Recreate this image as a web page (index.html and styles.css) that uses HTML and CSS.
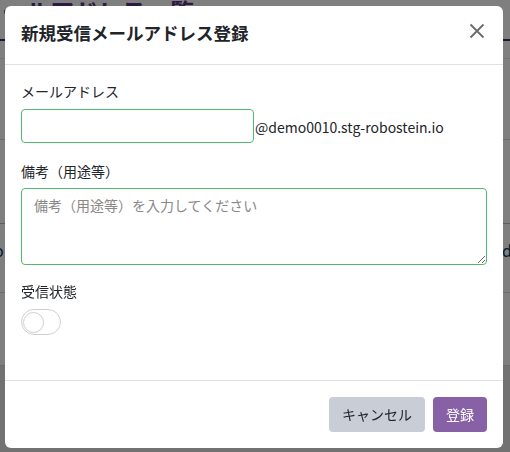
FILE: index.html
```html
<!DOCTYPE html>
<html lang="ja">
<head>
<meta charset="utf-8">
<title>新規受信メールアドレス登録</title>
<link rel="stylesheet" href="styles.css">
</head>
<body>
<div class="page" aria-hidden="true">
  <div class="page-head">
    <h1 class="page-title">受信メールアドレス一覧</h1>
  </div>
  <div class="table">
    <div class="row row-head"></div>
    <div class="row row-a"></div>
    <div class="row row-b"></div>
    <div class="row row-c"><span class="cell-l">o</span><span class="cell-r">d</span></div>
    <div class="row row-d"></div>
  </div>
</div>

<div class="overlay">
  <div class="modal">
    <div class="modal-header">
      <h2 class="modal-title">新規受信メールアドレス登録</h2>
      <button class="close" type="button" aria-label="閉じる">
        <svg width="16" height="16" viewBox="0 0 16 16"><path d="M1.5 1.5 L14.5 14.5 M14.5 1.5 L1.5 14.5" stroke="#6b6b6b" stroke-width="1.8" fill="none"/></svg>
      </button>
    </div>
    <div class="modal-body">
      <label class="label">メールアドレス</label>
      <div class="mail-row">
        <input class="input" type="text">
        <span class="domain">@demo0010.stg-robostein.io</span>
      </div>
      <label class="label label-note">備考（用途等）</label>
      <textarea class="textarea" placeholder="備考（用途等）を入力してください"></textarea>
      <label class="label label-state">受信状態</label>
      <div class="switch"><span class="knob"></span></div>
    </div>
    <div class="modal-footer">
      <button class="btn btn-cancel" type="button">キャンセル</button>
      <button class="btn btn-primary" type="button">登録</button>
    </div>
  </div>
</div>
</body>
</html>
```
FILE: styles.css
```css
html, body {
  margin: 0;
  padding: 0;
}
body {
  font-family: "Noto Sans CJK JP", "Noto Sans", sans-serif;
  color: #212529;
  background: #e4e4e4;
  width: 510px;
  height: 452px;
  overflow: hidden;
}

/* background page */
.page {
  background: #ffffff;
  height: 365px;
}
.page-head {
  height: 39px;
  border-bottom: 2px solid #4a2a6a;
  overflow: hidden;
}
.page-title {
  margin: 0 0 0 -70px;
  padding-top: 0;
  font-size: 24px;
  line-height: 24px;
  font-weight: bold;
  color: #5a3282;
  white-space: nowrap;
  position: relative;
  top: -1px;
}
.table {
  display: flex;
  flex-direction: column;
}
.row {
  border-bottom: 1px solid #d6d6d6;
  box-sizing: border-box;
  position: relative;
}
.row-head { height: 18px; border-bottom-color: #e6e6e6; }
.row-a { height: 81px; }
.row-b { height: 84px; border-bottom: 1px solid #bdbdbd; }
.row-c { height: 69px; background: #ffffff; }
.row-d { height: 73px; }
.cell-l, .cell-r {
  position: absolute;
  top: 16px;
  font-size: 16px;
  line-height: 20px;
  color: #003a6a;
}
.cell-l { left: -6px; }
.cell-r { right: -2px; }

/* modal */
.overlay {
  position: fixed;
  inset: 0;
  background: rgba(0, 0, 0, 0.5);
  padding: 6px 0 0 5px;
}
.modal {
  width: 498px;
  background: #ffffff;
  border-radius: 6px;
  display: flex;
  flex-direction: column;
}
.modal-header {
  height: 58px;
  border-bottom: 1px solid #dee2e6;
  display: flex;
  align-items: center;
  justify-content: space-between;
  padding: 0 18px 0 16px;
}
.modal-title {
  margin: 0;
  font-size: 17.5px;
  font-weight: bold;
  line-height: 24px;
  color: #212529;
  position: relative;
  top: -2px;
}
.close {
  border: 0;
  background: transparent;
  padding: 0;
  width: 16px;
  height: 16px;
  display: flex;
  position: relative;
  top: -4px;
}
.modal-body {
  padding: 16px 16px 45px;
  display: flex;
  flex-direction: column;
  align-items: flex-start;
}
.label {
  font-size: 14px;
  line-height: 21px;
  margin-bottom: 7px;
}
.label-note { margin-top: 18px; margin-bottom: 6px; }
.label-state { margin-top: 16px; }
.mail-row {
  display: flex;
  align-items: center;
}
.input {
  width: 233px;
  height: 34px;
  box-sizing: border-box;
  border: 1px solid #52b86f;
  border-radius: 4px;
  font-family: inherit;
  font-size: 14px;
  padding: 0 12px;
  margin: 0;
  outline: none;
}
.domain {
  font-size: 14px;
  line-height: 20px;
  color: #212529;
  margin-left: 1px;
  position: relative;
  top: 1px;
}
.textarea {
  width: 466px;
  height: 77px;
  box-sizing: border-box;
  border: 1px solid #52b86f;
  border-radius: 4px;
  font-family: inherit;
  font-size: 14px;
  line-height: 21px;
  padding: 6px 12px;
  margin: 0;
  outline: none;
  resize: vertical;
  display: block;
}
.textarea::placeholder {
  color: #8a8785;
}
.switch {
  width: 40px;
  height: 26px;
  box-sizing: border-box;
  border: 1px solid #cfcfcf;
  border-radius: 13px;
  background: #ffffff;
  display: flex;
  align-items: center;
  padding-left: 1px;
}
.knob {
  width: 21px;
  height: 21px;
  box-sizing: border-box;
  border: 1px solid #cfcfcf;
  border-radius: 50%;
  background: #ffffff;
}
.modal-footer {
  border-top: 1px solid #dee2e6;
  padding: 16px;
  display: flex;
  justify-content: flex-end;
  gap: 8px;
}
.btn {
  height: 35px;
  padding: 0 13px;
  border: 0;
  border-radius: 4px;
  font-family: inherit;
  font-size: 14px;
  line-height: 35px;
}
.btn-cancel {
  background: #c9ced6;
  color: #212529;
}
.btn-primary {
  background: #8860a5;
  color: #ffffff;
}
```
